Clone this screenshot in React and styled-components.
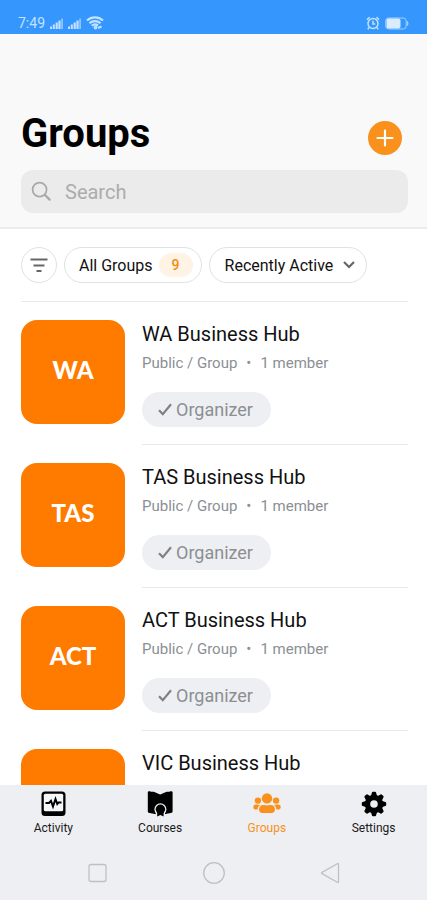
import React, { useState } from 'react';
import styled, { createGlobalStyle } from 'styled-components';

const GlobalStyle = createGlobalStyle`
  * {
    box-sizing: border-box;
  }

  body {
    margin: 0;
    background-color: #fff;
    font-family: Roboto, "Liberation Sans", sans-serif;
  }

  button, input, select {
    font-family: inherit;
  }
`;

const Screen = styled.div`
  display: flex;
  flex-direction: column;
  height: 100vh;
  overflow: hidden;
`;

const StatusBar = styled.div`
  display: flex;
  justify-content: space-between;
  align-items: flex-end;
  flex-shrink: 0;
  height: 34px;
  padding: 0 18px 3px;
  background-color: #3597fd;
  color: #c3e2ff;
  font-size: 14px;
  line-height: 16px;
`;

const StatusGroup = styled.div`
  display: flex;
  align-items: center;
  gap: 5px;
  height: 16px;
`;

const Header = styled.header`
  flex-shrink: 0;
  padding: 76px 19px 14px 21px;
  background-color: #f9f9f9;
  border-bottom: 2px solid #ececec;
`;

const TitleRow = styled.div`
  display: flex;
  justify-content: space-between;
  align-items: center;
  padding-right: 6px;
`;

const Title = styled.h1`
  margin: 0;
  font-size: 40px;
  line-height: 48px;
  font-weight: 700;
  color: #000;
`;

const AddButton = styled.button`
  display: flex;
  align-items: center;
  justify-content: center;
  width: 34px;
  height: 34px;
  margin-top: 8px;
  padding: 0;
  border: none;
  border-radius: 50%;
  background-color: #f9911c;
  cursor: pointer;
`;

const SearchBox = styled.label`
  display: flex;
  align-items: center;
  gap: 12px;
  height: 43px;
  margin-top: 12px;
  padding: 0 10px;
  border-radius: 12px;
  background-color: #ebebeb;
`;

const SearchInput = styled.input`
  flex: 1;
  min-width: 0;
  padding: 0;
  border: none;
  outline: none;
  background: none;
  font-size: 20px;
  color: #333;

  &::placeholder {
    color: #acacac;
    opacity: 1;
  }
`;

const Main = styled.main`
  flex: 1;
  min-height: 0;
  padding: 0 19px 0 21px;
  overflow-y: auto;
  scrollbar-width: none;
`;

const Filters = styled.div`
  display: flex;
  gap: 7px;
  padding: 18px 0;
  border-bottom: 1px solid #e9e9ea;
`;

const Pill = styled.button`
  display: flex;
  align-items: center;
  justify-content: center;
  gap: 6px;
  height: 36px;
  width: ${({ $round }) => ($round ? '36px' : 'auto')};
  padding: ${({ $round }) => ($round ? '0' : '0 8px 0 14px')};
  border: 1px solid #e0e1e3;
  border-radius: 18px;
  background-color: #fff;
  font-size: 16px;
  color: #111;
  cursor: pointer;
`;

const Count = styled.span`
  width: 34px;
  border-radius: 12px;
  background-color: #fff3e6;
  color: #f08c10;
  font-size: 14px;
  font-weight: 500;
  line-height: 24px;
  text-align: center;
`;

const SortBox = styled.div`
  display: grid;
  align-items: center;
  height: 36px;
  border: 1px solid #e0e1e3;
  border-radius: 18px;

  > * {
    grid-area: 1 / 1;
  }

  svg {
    justify-self: end;
    margin-right: 10px;
    pointer-events: none;
  }
`;

const SortSelect = styled.select`
  height: 34px;
  padding: 0 32px 0 15px;
  border: none;
  border-radius: 17px;
  background: none;
  appearance: none;
  font-size: 16px;
  color: #111;
`;

const GroupList = styled.ul`
  margin: 0;
  padding: 0;
  list-style: none;
`;

const GroupItem = styled.li`
  display: flex;
  gap: 17px;
  padding-top: 18px;
`;

const Avatar = styled.div`
  display: flex;
  align-items: center;
  justify-content: center;
  flex-shrink: 0;
  width: 104px;
  height: 104px;
  padding-bottom: 6px;
  border-radius: 16px;
  background-color: #ff7b00;
  color: #fff;
  font-family: Lato, sans-serif;
  font-size: 24px;
  font-weight: 900;
`;

const GroupBody = styled.div`
  flex: 1;
  min-width: 0;
  height: 125px;
  border-bottom: 1px solid #e9e9ea;
`;

const GroupName = styled.h2`
  margin: 0;
  padding-top: 1px;
  font-size: 20px;
  line-height: 26px;
  font-weight: 400;
  color: #111;
`;

const Meta = styled.p`
  display: flex;
  gap: 9px;
  margin: 6px 0 19px;
  font-size: 15px;
  line-height: 20px;
  color: #8b8f94;
`;

const RoleButton = styled.button`
  display: flex;
  align-items: center;
  gap: 4px;
  height: 35px;
  padding: 0 18px 0 16px;
  border: none;
  border-radius: 18px;
  background-color: #eeeff2;
  font-size: 18px;
  color: #8b8f94;
`;

const TabBar = styled.nav`
  display: grid;
  grid-template-columns: repeat(4, 1fr);
  flex-shrink: 0;
  height: 60px;
  padding-top: 6px;
  background-color: #eeeff3;
`;

const Tab = styled.a`
  display: flex;
  flex-direction: column;
  align-items: center;
  gap: 4px;
  font-size: 12px;
  line-height: 14px;
  text-decoration: none;
  color: ${({ $active }) => ($active ? '#f9911c' : '#1a1a1a')};
`;

const SystemNav = styled.div`
  display: flex;
  align-items: center;
  justify-content: space-between;
  flex-shrink: 0;
  height: 55px;
  padding: 0 84px;
  background-color: #eeeff3;
`;

const SystemButton = styled.button`
  display: flex;
  padding: 0;
  border: none;
  background: none;
`;

const SignalIcon = () => (
  <svg width="13" height="12" viewBox="0 0 13 12" fill="currentColor">
    <rect x="0" y="9.5" width="2" height="2.5" />
    <rect x="2.8" y="7.5" width="2" height="4.5" />
    <rect x="5.6" y="5.5" width="2.2" height="6.5" />
    <rect x="8.4" y="3.5" width="2.2" height="8.5" />
    <rect x="11.2" y="1.5" width="1.8" height="10.5" opacity="0.6" />
  </svg>
);

const WifiIcon = () => (
  <svg width="18" height="14" viewBox="0 0 18 14" fill="none" stroke="currentColor" strokeWidth="2.2">
    <path d="M1 4.5C5.5 0.4 12.5 0.4 17 4.5" />
    <path d="M3.5 7.2C6.6 4.3 11.4 4.3 14.5 7.2" />
    <path d="M5.8 9.8C7.6 8 10 8 12 9.5" />
    <circle cx="9.5" cy="11.5" r="0.8" />
    <path d="M12 12L15.5 10.5" />
  </svg>
);

const AlarmIcon = () => (
  <svg width="14" height="14" viewBox="0 0 14 14" fill="none" stroke="currentColor" strokeWidth="1.5">
    <circle cx="7" cy="7.5" r="5" />
    <path d="M7 4.8V8H9.2M1 3.6L3.6 1.2M13 3.6L10.4 1.2M3.2 11.4L1.8 13.2M10.8 11.4L12.2 13.2" />
  </svg>
);

const BatteryIcon = () => (
  <svg width="24" height="13" viewBox="0 0 24 13">
    <rect x="0.7" y="1" width="20.5" height="11" rx="3" fill="none" stroke="#9fd0ff" />
    <rect x="1.5" y="1.5" width="14" height="10" rx="2" fill="#d9edff" />
    <path d="M22 4.5Q23.4 6.5 22 8.5" fill="none" stroke="#9fd0ff" strokeWidth="1.4" />
  </svg>
);

const PlusIcon = () => (
  <svg width="18" height="18" viewBox="0 0 18 18" stroke="#fff" strokeWidth="2.2" strokeLinecap="round">
    <path d="M9 1.5V16.5M1.5 9H16.5" />
  </svg>
);

const SearchIcon = () => (
  <svg width="22" height="22" viewBox="0 0 22 22" fill="none" stroke="#a8a8a8" strokeLinecap="round">
    <circle cx="8.6" cy="8.6" r="7" strokeWidth="1.7" />
    <path d="M14 14L18.6 18.6" strokeWidth="2.3" />
  </svg>
);

const FilterIcon = () => (
  <svg width="18" height="16" viewBox="0 0 18 16" stroke="#666" strokeWidth="2">
    <path d="M0.5 2.5H17.5M3.5 8.5H14.5M6.5 14H11.5" />
  </svg>
);

const ChevronIcon = () => (
  <svg width="14" height="14" viewBox="0 0 14 14" fill="none" stroke="#666" strokeWidth="2.2">
    <path d="M2 4L7 9L12 4" />
  </svg>
);

const CheckIcon = () => (
  <svg width="14" height="14" viewBox="0 0 14 14" fill="none" stroke="#7d8186" strokeWidth="2.2">
    <path d="M1 7.3L4.8 11.1L13 1.3" />
  </svg>
);

const ActivityIcon = () => (
  <svg width="26" height="26" viewBox="0 0 26 26">
    <rect x="1.5" y="0.5" width="24" height="24.5" rx="3.5" fill="#000" />
    <rect x="3.8" y="2.7" width="19.4" height="17.6" rx="1.5" fill="#f6f7fa" />
    <path
      d="M5.5 12H9L11 9.8L13 15.5L15.5 8L17.3 13L18.5 11.5H21.5"
      fill="none"
      stroke="#000"
      strokeWidth="2"
    />
  </svg>
);

const CoursesIcon = () => (
  <svg width="26" height="26" viewBox="0 0 26 26">
    <path
      d="M0.8 1.5C0.8 0.4 2 0 3.4 0.4C4.6 0.8 5.4 0.5 6.6 0.8C9.4 1.6 11.5 2.8 13.2 3.6C14.9 2.8 17 1.6 19.8 0.8C21 0.5 21.8 0.8 23 0.4C24.4 0 25.6 0.4 25.6 1.5V20.2C25.6 21.3 25 21.9 23.8 21.9L13.2 24L2.6 21.9C1.4 21.9 0.8 21.3 0.8 20.2Z"
      fill="#000"
    />
    <circle cx="13.4" cy="18.3" r="6" fill="#eeeff3" />
    <path d="M8.8 21H18V26H8.8Z" fill="#eeeff3" />
    <circle cx="13.4" cy="18.3" r="4.7" fill="#000" />
    <path d="M10.2 20.5H16.6V25.5L13.4 24L10.2 25.5Z" fill="#000" />
  </svg>
);

const GroupsIcon = () => (
  <svg width="28" height="26" viewBox="0 0 28 26" fill="#f9911c">
    <circle cx="14" cy="7.4" r="5.2" />
    <path d="M6 18.3C6 14.8 9 13.5 11 14.1C13 14.7 15 14.7 17 14.1C19 13.5 22 14.8 22 18.3C22 21 20.5 22 18.8 22H9.2C7.5 22 6 21 6 18.3Z" />
    <circle cx="4.9" cy="9.6" r="3.2" />
    <circle cx="23.1" cy="9.6" r="3.2" />
    <path d="M0.3 16C0.3 13.8 2.3 13.2 4 13.6C5 13.9 6 13.5 7 14C5.3 15.3 4.8 16.5 4.7 18.4H2.3C1 18.4 0.3 17.3 0.3 16Z" />
    <path d="M27.7 16C27.7 13.8 25.7 13.2 24 13.6C23 13.9 22 13.5 21 14C22.7 15.3 23.2 16.5 23.3 18.4H25.7C27 18.4 27.7 17.3 27.7 16Z" />
  </svg>
);

const gearTeeth = [0, 45, 90, 135, 180, 225, 270, 315];

const SettingsIcon = () => (
  <svg width="26" height="26" viewBox="0 0 26 26" fill="#000">
    {gearTeeth.map((angle) => (
      <path
        key={angle}
        d="M10.9 1.8Q11 0.8 12 0.8H14Q15 0.8 15.1 1.8L16.4 6H9.6Z"
        transform={`rotate(${angle} 13 13)`}
      />
    ))}
    <circle cx="13" cy="13" r="6.5" fill="none" stroke="#000" strokeWidth="5.4" />
  </svg>
);

const groups = [
  { code: 'WA', name: 'WA Business Hub' },
  { code: 'TAS', name: 'TAS Business Hub' },
  { code: 'ACT', name: 'ACT Business Hub' },
  { code: 'VIC', name: 'VIC Business Hub' },
];

const tabs = [
  { label: 'Activity', icon: <ActivityIcon /> },
  { label: 'Courses', icon: <CoursesIcon /> },
  { label: 'Groups', icon: <GroupsIcon /> },
  { label: 'Settings', icon: <SettingsIcon /> },
];

const GroupRow = ({ group }) => (
  <GroupItem>
    <Avatar>{group.code}</Avatar>
    <GroupBody>
      <GroupName>{group.name}</GroupName>
      <Meta>
        <span>Public / Group</span>
        <span>•</span>
        <span>1 member</span>
      </Meta>
      <RoleButton type="button">
        <CheckIcon /> Organizer
      </RoleButton>
    </GroupBody>
  </GroupItem>
);

const App = () => {
  const [query, setQuery] = useState('');
  const [activeTab, setActiveTab] = useState('Groups');

  const visibleGroups = groups.filter((group) =>
    group.name.toLowerCase().includes(query.toLowerCase())
  );

  return (
    <Screen>
      <GlobalStyle />
      <StatusBar>
        <StatusGroup>
          <span>7:49</span>
          <SignalIcon />
          <SignalIcon />
          <WifiIcon />
        </StatusGroup>
        <StatusGroup>
          <AlarmIcon />
          <BatteryIcon />
        </StatusGroup>
      </StatusBar>

      <Header>
        <TitleRow>
          <Title>Groups</Title>
          <AddButton type="button" aria-label="Add group">
            <PlusIcon />
          </AddButton>
        </TitleRow>
        <SearchBox>
          <SearchIcon />
          <SearchInput
            type="text"
            aria-label="Search"
            placeholder="Search"
            value={query}
            onChange={(e) => setQuery(e.target.value)}
          />
        </SearchBox>
      </Header>

      <Main>
        <Filters>
          <Pill type="button" $round aria-label="Filter">
            <FilterIcon />
          </Pill>
          <Pill type="button">
            All Groups <Count>9</Count>
          </Pill>
          <SortBox>
            <SortSelect aria-label="Sort groups">
              <option>Recently Active</option>
            </SortSelect>
            <ChevronIcon />
          </SortBox>
        </Filters>
        <GroupList>
          {visibleGroups.map((group) => (
            <GroupRow key={group.code} group={group} />
          ))}
        </GroupList>
      </Main>

      <TabBar>
        {tabs.map(({ label, icon }) => (
          <Tab
            key={label}
            href={`#${label.toLowerCase()}`}
            $active={label === activeTab}
            onClick={() => setActiveTab(label)}
          >
            {icon}
            {label}
          </Tab>
        ))}
      </TabBar>

      <SystemNav>
        <SystemButton type="button" aria-label="Recent apps">
          <svg width="26" height="26" viewBox="0 0 26 26" fill="none" stroke="#bfc0c3" strokeWidth="1.3">
            <rect x="5" y="4.5" width="17" height="17" rx="2" />
          </svg>
        </SystemButton>
        <SystemButton type="button" aria-label="Home">
          <svg width="26" height="26" viewBox="0 0 26 26" fill="none" stroke="#bfc0c3" strokeWidth="1.3">
            <circle cx="13" cy="13" r="10.3" />
          </svg>
        </SystemButton>
        <SystemButton type="button" aria-label="Back">
          <svg width="26" height="26" viewBox="0 0 26 26" fill="none" stroke="#bfc0c3" strokeWidth="1.3">
            <path d="M21.5 4.3V21.7Q21.5 23 20.3 22.3L5 13.6Q4 13 5 12.4L20.3 3.7Q21.5 3 21.5 4.3Z" />
          </svg>
        </SystemButton>
      </SystemNav>
    </Screen>
  );
};

export default App;
